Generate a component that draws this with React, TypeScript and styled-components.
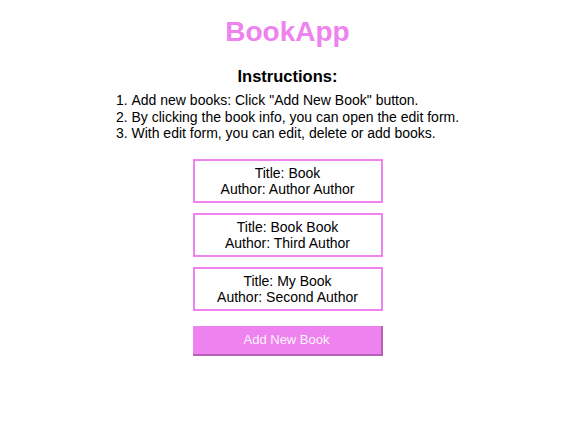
import React from "react";
import styled, { createGlobalStyle } from "styled-components";

const Global = createGlobalStyle`
  html, body { margin: 0; padding: 0; background: #ffffff; }
  body { font-family: "Liberation Sans", Arial, sans-serif; color: #000; }
`;

const Page = styled.div`
  width: 575px;
  display: flex;
  flex-direction: column;
  align-items: center;
  padding-top: 14px;
`;

const Title = styled.h1`
  margin: 0;
  font-size: 28px;
  font-weight: bold;
  color: #ee82ee;
  line-height: 36px;
`;

const InstructionsTitle = styled.h3`
  margin: 16px 0 0;
  font-size: 16.5px;
  font-weight: bold;
  line-height: 20px;
`;

const List = styled.ol`
  margin: 6px 0 0;
  padding: 0;
  list-style-position: inside;
  font-size: 14px;
  line-height: 16.5px;
`;

const Books = styled.div`
  margin-top: 17px;
  display: flex;
  flex-direction: column;
  gap: 10px;
  width: 190px;
`;

const BookCard = styled.div`
  border: 2px solid #ee82ee;
  padding: 4px;
  text-align: center;
  font-size: 14px;
  line-height: 16px;
  cursor: pointer;
`;

const AddButton = styled.button`
  margin-top: 5px;
  width: 190px;
  height: 30px;
  background: #ee82ee;
  color: #fdf4fd;
  border: none;
  border-right: 2px solid #b562b5;
  border-bottom: 2px solid #b562b5;
  font-family: "Liberation Sans", Arial, sans-serif;
  font-size: 13px;
  padding: 0;
  cursor: pointer;
`;

const books = [
  { title: "Book", author: "Author Author" },
  { title: "Book Book", author: "Third Author" },
  { title: "My Book", author: "Second Author" },
];

export default function App() {
  return (
    <>
      <Global />
      <Page>
        <Title>BookApp</Title>
        <InstructionsTitle>Instructions:</InstructionsTitle>
        <List>
          <li>Add new books: Click "Add New Book" button.</li>
          <li>By clicking the book info, you can open the edit form.</li>
          <li>With edit form, you can edit, delete or add books.</li>
        </List>
        <Books>
          {books.map((b) => (
            <BookCard key={b.title}>
              Title: {b.title}
              <br />
              Author: {b.author}
            </BookCard>
          ))}
          <AddButton>Add New Book</AddButton>
        </Books>
      </Page>
    </>
  );
}
